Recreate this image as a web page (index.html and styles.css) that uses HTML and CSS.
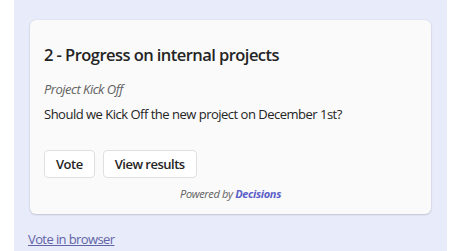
FILE: index.html
```html
<!DOCTYPE html>
<html>
<head>
<meta charset="utf-8">
<link rel="stylesheet" href="styles.css">
</head>
<body>
<div class="frame">
  <div class="card">
    <h1 class="title">2 - Progress on internal projects</h1>
    <p class="subtitle">Project Kick Off</p>
    <p class="question">Should we Kick Off the new project on December 1st?</p>
    <div class="actions">
      <button class="btn">Vote</button>
      <button class="btn">View results</button>
    </div>
    <p class="powered">Powered by <span class="brand">Decisions</span></p>
  </div>
  <a class="link" href="#">Vote in browser</a>
</div>
</body>
</html>
```
FILE: styles.css
```css
html, body {
  margin: 0;
  padding: 0;
  background: #ffffff;
}
body {
  font-family: "Open Sans", "Noto Sans", sans-serif;
  color: #242424;
  width: 450px;
  height: 251px;
  overflow: hidden;
}
.frame {
  margin: 0 3px 0 14px;
  background: #e8ebfa;
  height: 251px;
  padding: 20px 16px 0 16px;
  box-sizing: border-box;
}
.card {
  background: #fafafa;
  border-radius: 6px;
  box-shadow: 0 1px 2px rgba(0,0,0,0.14), 0 0 2px rgba(0,0,0,0.10);
  padding: 24px 14px 0 14px;
  height: 194px;
  box-sizing: border-box;
}
.title {
  margin: 0;
  font-size: 16.5px;
  letter-spacing: -0.55px;
  font-weight: 600;
  line-height: 22px;
}
.subtitle {
  margin: 13px 0 0 0;
  font-size: 13px;
  letter-spacing: -0.5px;
  font-style: italic;
  color: #616161;
  line-height: 20px;
}
.question {
  margin: 5px 0 0 0;
  font-size: 13px;
  letter-spacing: -0.5px;
  line-height: 20px;
}
.actions {
  display: flex;
  gap: 8px;
  margin-top: 26px;
}
.btn {
  font-family: inherit;
  font-size: 13px;
  letter-spacing: -0.5px;
  font-weight: 600;
  color: #242424;
  background: #ffffff;
  border: 1px solid #e0e0e0;
  border-radius: 4px;
  height: 28px;
  padding: 0 11px;
}
.powered {
  margin: 8px 0 0 0;
  text-align: center;
  font-size: 11px;
  letter-spacing: -0.35px;
  line-height: 16px;
  font-style: italic;
  color: #616161;
}
.brand {
  color: #5b5fc7;
  font-weight: 700;
}
.link {
  display: inline-block;
  margin: 16px 0 0 -2px;
  font-size: 13px;
  letter-spacing: -0.6px;
  color: #6264a7;
}
```
